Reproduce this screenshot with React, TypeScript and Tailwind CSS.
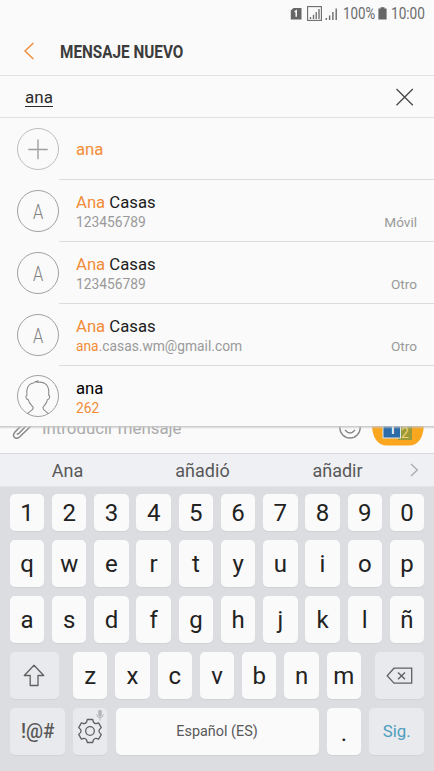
import React from 'react';
import clsx from 'clsx';

type Contact = {
  avatar: 'letter' | 'person';
  highlight?: string;
  name: string;
  detailHighlight?: string;
  detail?: string;
  type?: string;
};

const contacts: Contact[] = [
  { avatar: 'letter', highlight: 'Ana', name: ' Casas', detail: '123456789', type: 'Móvil' },
  { avatar: 'letter', highlight: 'Ana', name: ' Casas', detail: '123456789', type: 'Otro' },
  { avatar: 'letter', highlight: 'Ana', name: ' Casas', detailHighlight: 'ana', detail: '.casas.wm@gmail.com', type: 'Otro' },
  { avatar: 'person', name: 'ana', detailHighlight: '262' },
];

const StatusBar = () => (
  <div className="h-[27px] flex items-center justify-end pr-[8px] text-[#6b6b6b]">
    <svg width="53" height="20" viewBox="290 3 53 20" className="shrink-0">
      <path d="M293.5 7H301.5V18.5H290.8V9.5Z" fill="#666" />
      <path d="M294.6 10.8L296.2 9.9V15.8" fill="none" stroke="#fafafa" strokeWidth="1.5" />
      <rect x="307.6" y="5.6" width="13.8" height="13.8" fill="none" stroke="#6b6b6b" strokeWidth="1.1" />
      <path d="M310.5 18V16M313.5 18V13.8M316.2 18V11M319 18V8" stroke="#6b6b6b" strokeWidth="1.3" />
      <path d="M326.3 19V17M329.6 19V14.5M332.9 19V11M336.2 19V7.5" stroke="#6b6b6b" strokeWidth="1.4" />
    </svg>
    <span className="w-[32px] text-[16px] whitespace-nowrap">
      <span className="inline-block origin-left scale-x-[0.83]">100%</span>
    </span>
    <svg width="9" height="13" viewBox="0 0 9 13" className="ml-[3px] mr-[4px] shrink-0">
      <path d="M2.5 0.3H6.5V1.6H8.6V12.6H0.4V1.6H2.5Z" fill="#666" />
    </svg>
    <span className="w-[35px] text-[16px] whitespace-nowrap">
      <span className="inline-block origin-left scale-x-[0.85]">10:00</span>
    </span>
  </div>
);

const Avatar = ({ kind }: { kind: 'add' | 'letter' | 'person' }) => (
  <svg
    width="42"
    height="42"
    viewBox="0 0 42 42"
    fill="none"
    className={clsx('ml-[17px] shrink-0', kind === 'letter' && '-mt-[1px]', kind === 'add' && '-mt-[1px]')}
  >
    <circle cx="21" cy="21" r="20.5" stroke={kind === 'add' ? '#bdbdbd' : '#a0a0a0'} strokeWidth="1" />
    {kind === 'add' && <path d="M11.3 21.5H30.7M21 11.5V31.3" stroke="#a0a0a0" strokeWidth="1.4" />}
    {kind === 'letter' && (
      <text x="0" y="0" transform="translate(21 28.5) scale(0.82 1)" textAnchor="middle" fontSize="20" fontWeight="300" fill="#808080" className="font-[Roboto]">
        A
      </text>
    )}
    {kind === 'person' && (
      <path
        d="M10.5 38.6C11.6 37 15.7 35.8 16.3 32.8C16 31.2 12 29 11.4 24.8C9 24.6 8.2 20.5 9.9 20.2C9.2 15.5 10.2 8.6 16.6 8C17.6 6.7 19 6.3 20.8 6.1L20 7.3C27.6 6.4 32.8 9.6 31.6 20.2C33.6 20.3 32.6 24.6 30.4 24.8C29.8 29 26.2 31 25.8 32.8C26.2 35.8 30 36.8 31.4 38.6"
        stroke="#8c8c8c"
        strokeWidth="1.1"
      />
    )}
  </svg>
);

const ContactRow = ({ contact, last }: { contact: Contact; last: boolean }) => (
  <div className={clsx('flex items-center', last ? 'h-[60px]' : 'h-[62px]')}>
    <Avatar kind={contact.avatar} />
    <div className={clsx('flex-1 h-full flex items-end justify-between pl-[17px] pr-[17px]', last ? 'pb-[8px]' : 'border-b border-[#dcdcdc] pb-[9px]')}>
      <div>
        <div className={clsx('text-[16.7px] leading-[21px] whitespace-pre', last ? 'text-black' : 'text-[#1c1c1c]')}>
          <span className="text-[#f28c38]">{contact.highlight}</span>
          {contact.name}
        </div>
        <div className="text-[13.8px] leading-[19px] text-[#999]">
          <span className="text-[#f28c38]">{contact.detailHighlight}</span>
          {contact.detail}
        </div>
      </div>
      <div className="text-[13.6px] leading-[19px] text-[#999]">{contact.type}</div>
    </div>
  </div>
);

const ComposeBar = () => (
  <div className="relative h-[28px] overflow-hidden border-b border-[#d8d9db] bg-[#fafafa]">
    <svg width="434" height="27" viewBox="0 426 434 27" fill="none" className="absolute inset-0">
      <path d="M31 426L19.5 437Q16.5 439.5 14.3 437.3Q12.4 435 15 432L21 426M26 426L19 433.3Q17.6 434.6 16.8 433.5" stroke="#858585" strokeWidth="1.4" />
      <circle cx="350" cy="427.8" r="10.2" stroke="#858585" strokeWidth="1.3" />
      <path d="M345 430Q350 436 355 430" stroke="#858585" strokeWidth="1.3" />
      <path d="M372 426C372.5 438 378 445.6 387 445.6H409C418 445.6 423.3 438 423.8 426Z" fill="#faa61f" />
      <rect x="398" y="424" width="14" height="16" fill="#9b9a38" />
      <rect x="383" y="420" width="17.5" height="18" fill="#2d6ca8" stroke="#dce8ee" strokeWidth="1" />
      <text x="387.3" y="434" fontSize="18" fill="#fff" className="font-[Roboto]">1</text>
      <text x="401" y="437.5" fontSize="14" fill="#f1cf72" className="font-[Roboto]">2</text>
    </svg>
    <div className="absolute left-[42px] -top-[9px] text-[16.8px] leading-[22px] text-[#aaa]">Introducir mensaje</div>
    <div className="absolute inset-x-0 top-0 h-[3px] bg-linear-to-b from-[#c4c4c4] to-transparent" />
  </div>
);

const Key = ({ children, className, dim }: { children: React.ReactNode; className?: string; dim?: boolean }) => (
  <div
    className={clsx(
      'h-[47px] flex items-center justify-center rounded-[5px] shadow-[0_1px_0_#d2d3d6]',
      dim ? 'bg-[#e9eaed] text-[#585858]' : 'bg-[#fafafa] text-[#222]',
      className ?? 'w-[34.4px] text-[24px]'
    )}
  >
    {children}
  </div>
);

const Keyboard = () => (
  <div className="flex-1 flex flex-col gap-[9px] bg-[#dcdde1] pt-[7px] px-[9.8px]">
    <div className="flex justify-between">
      {'1234567890'.split('').map((k) => (
        <Key key={k} className="w-[34.4px] !h-[37px] text-[24px]">{k}</Key>
      ))}
    </div>
    {['qwertyuiop', 'asdfghjklñ'].map((row) => (
      <div key={row} className="flex justify-between">
        {row.split('').map((k) => (
          <Key key={k}>{k}</Key>
        ))}
      </div>
    ))}
    <div className="flex justify-between">
      <Key dim className="w-[49px]">
        <svg width="22" height="23" viewBox="0 0 22 23" fill="none" stroke="#606060" strokeWidth="1.3">
          <path d="M11 1.2L20.7 11.5H15V21.5H7.2V11.5H1.3Z" strokeLinejoin="round" />
        </svg>
      </Key>
      <div className="w-[288px] flex justify-between">
        {'zxcvbnm'.split('').map((k) => (
          <Key key={k}>{k}</Key>
        ))}
      </div>
      <Key dim className="w-[49px]">
        <svg width="27" height="18" viewBox="0 0 27 18" fill="none" stroke="#606060" strokeWidth="1.3">
          <path d="M8 1.2H25.7V16.2H8L1.2 8.7Z" />
          <path d="M12 5.4L19 12.2M19 5.4L12 12.2" strokeWidth="1.4" />
        </svg>
      </Key>
    </div>
    <div className="flex justify-between">
      <Key dim className="w-[55px] pb-[2px] text-[20px] font-medium">
        <span className="scale-x-[0.95]">!@#</span>
      </Key>
      <Key dim className="relative w-[34.4px] pb-[2px]">
        <svg width="26" height="26" viewBox="-13 -13 26 26" fill="none" stroke="#606060" strokeWidth="1.3">
          <path
            d="M-2.7 -11.5H2.7L3.4 -9Q4.9 -7.1 6.1 -7.4L8.6 -8.1L11.3 -3.4L9.5 -1.6Q8.4 0 9.5 1.6L11.3 3.4L8.6 8.1L6.1 7.4Q4.9 7.1 3.4 9L2.7 11.5H-2.7L-3.4 9Q-4.9 7.1 -6.1 7.4L-8.6 8.1L-11.3 3.4L-9.5 1.6Q-8.4 0 -9.5 -1.6L-11.3 -3.4L-8.6 -8.1L-6.1 -7.4Q-4.9 -7.1 -3.4 -9Z"
            strokeLinejoin="round"
          />
          <circle r="4.3" />
        </svg>
        <svg width="8" height="12" viewBox="0 0 8 12" fill="none" className="absolute right-[3px] top-[1px]">
          <rect x="2.2" y="0.7" width="3.6" height="7" rx="1.8" fill="#b5b5b7" />
          <path d="M0.7 5.4Q1 8.7 4 8.7Q7 8.7 7.3 5.4M4 8.7V11.5" stroke="#b5b5b7" strokeWidth="1" />
        </svg>
      </Key>
      <Key className="w-[203px] text-[14.4px] !text-[#585858]">Español (ES)</Key>
      <Key className="w-[34.4px] pt-[3px] text-[24px]">.</Key>
      <Key dim className="w-[55px] text-[16.8px] !text-[#4a9dbd]">Sig.</Key>
    </div>
  </div>
);

const App = () => (
  <div className="w-[434px] h-[771px] flex flex-col overflow-hidden bg-[#fafafa] font-[Roboto,sans-serif]">
    <StatusBar />
    <header className="h-[49px] flex items-center border-b border-[#e2e2e2]">
      <svg width="12" height="18" viewBox="0 0 12 18" fill="none" className="ml-[23px]">
        <path d="M10.3 1L2 9L10.3 17" stroke="#ef8b38" strokeWidth="1.4" />
      </svg>
      <h1 className="ml-[25px] text-[18px] font-bold text-[#3c3c3c] whitespace-nowrap origin-left scale-x-[0.85]">MENSAJE NUEVO</h1>
    </header>
    <div className="h-[42px] flex items-center justify-between border-b border-[#e2e2e2] pl-[25px] pr-[20px]">
      <span className="text-[17px] leading-[18px] text-[#2c2c2c] border-b border-[#2c2c2c] pt-px -mb-px">ana</span>
      <svg width="19" height="18" viewBox="0 0 19 18" fill="none" stroke="#484848" strokeWidth="1.3">
        <path d="M1.5 1L17.8 17.2M17.8 1L1.5 17.2" />
      </svg>
    </div>

    <div className="h-[62px] flex items-center">
      <Avatar kind="add" />
      <div className="flex-1 h-full flex items-center border-b border-[#dcdcdc] pl-[17px] pt-[2px] text-[16.7px] text-[#f28c38]">ana</div>
    </div>
    {contacts.map((contact, i) => (
      <ContactRow key={i} contact={contact} last={i === contacts.length - 1} />
    ))}

    <ComposeBar />
    <div className="h-[33px] flex items-center bg-[#eff0f3] border-b border-[#e4e5e8] text-[18px] text-[#585858]">
      <div className="w-[135px] text-center">Ana</div>
      <div className="w-[135px] text-center">añadió</div>
      <div className="w-[135px] text-center">añadir</div>
      <svg width="9" height="14" viewBox="0 0 9 14" fill="none" className="ml-[5px]">
        <path d="M1 1L7.3 7L1 13" stroke="#aaa" strokeWidth="1.3" />
      </svg>
    </div>
    <Keyboard />
  </div>
);

export default App;
